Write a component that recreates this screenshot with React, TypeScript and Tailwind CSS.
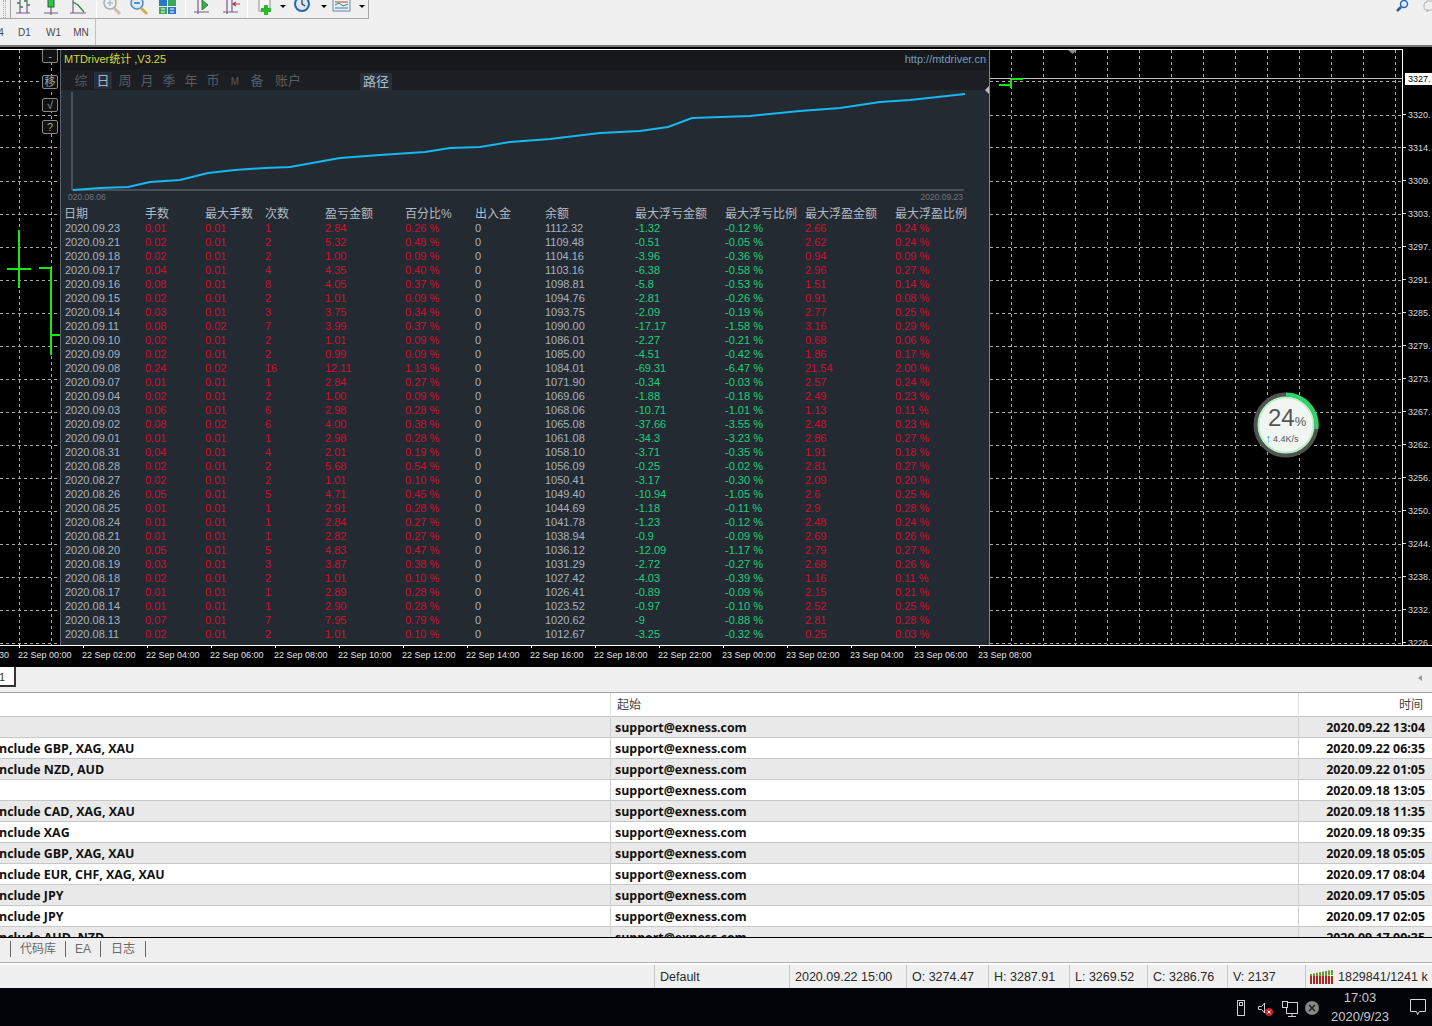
import { Fragment } from "react";

const headers = ["日期", "手数", "最大手数", "次数", "盈亏金额", "百分比%", "出入金", "余额", "最大浮亏金额", "最大浮亏比例", "最大浮盈金额", "最大浮盈比例"];

// date, lots, max lots, count, profit, pct, cash, balance, max loss, loss %, max gain, gain %
const rows = [
  "2020.09.23|0.01|0.01|1|2.84|0.26 %|0|1112.32|-1.32|-0.12 %|2.66|0.24 %",
  "2020.09.21|0.02|0.01|2|5.32|0.48 %|0|1109.48|-0.51|-0.05 %|2.62|0.24 %",
  "2020.09.18|0.02|0.01|2|1.00|0.09 %|0|1104.16|-3.96|-0.36 %|0.94|0.09 %",
  "2020.09.17|0.04|0.01|4|4.35|0.40 %|0|1103.16|-6.38|-0.58 %|2.96|0.27 %",
  "2020.09.16|0.08|0.01|8|4.05|0.37 %|0|1098.81|-5.8|-0.53 %|1.51|0.14 %",
  "2020.09.15|0.02|0.01|2|1.01|0.09 %|0|1094.76|-2.81|-0.26 %|0.91|0.08 %",
  "2020.09.14|0.03|0.01|3|3.75|0.34 %|0|1093.75|-2.09|-0.19 %|2.77|0.25 %",
  "2020.09.11|0.08|0.02|7|3.99|0.37 %|0|1090.00|-17.17|-1.58 %|3.16|0.29 %",
  "2020.09.10|0.02|0.01|2|1.01|0.09 %|0|1086.01|-2.27|-0.21 %|0.68|0.06 %",
  "2020.09.09|0.02|0.01|2|0.99|0.09 %|0|1085.00|-4.51|-0.42 %|1.86|0.17 %",
  "2020.09.08|0.24|0.02|16|12.11|1.13 %|0|1084.01|-69.31|-6.47 %|21.54|2.00 %",
  "2020.09.07|0.01|0.01|1|2.84|0.27 %|0|1071.90|-0.34|-0.03 %|2.57|0.24 %",
  "2020.09.04|0.02|0.01|2|1.00|0.09 %|0|1069.06|-1.88|-0.18 %|2.49|0.23 %",
  "2020.09.03|0.06|0.01|6|2.98|0.28 %|0|1068.06|-10.71|-1.01 %|1.13|0.11 %",
  "2020.09.02|0.08|0.02|6|4.00|0.38 %|0|1065.08|-37.66|-3.55 %|2.48|0.23 %",
  "2020.09.01|0.01|0.01|1|2.98|0.28 %|0|1061.08|-34.3|-3.23 %|2.86|0.27 %",
  "2020.08.31|0.04|0.01|4|2.01|0.19 %|0|1058.10|-3.71|-0.35 %|1.91|0.18 %",
  "2020.08.28|0.02|0.01|2|5.68|0.54 %|0|1056.09|-0.25|-0.02 %|2.81|0.27 %",
  "2020.08.27|0.02|0.01|2|1.01|0.10 %|0|1050.41|-3.17|-0.30 %|2.09|0.20 %",
  "2020.08.26|0.05|0.01|5|4.71|0.45 %|0|1049.40|-10.94|-1.05 %|2.6|0.25 %",
  "2020.08.25|0.01|0.01|1|2.91|0.28 %|0|1044.69|-1.18|-0.11 %|2.9|0.28 %",
  "2020.08.24|0.01|0.01|1|2.84|0.27 %|0|1041.78|-1.23|-0.12 %|2.48|0.24 %",
  "2020.08.21|0.01|0.01|1|2.82|0.27 %|0|1038.94|-0.9|-0.09 %|2.69|0.26 %",
  "2020.08.20|0.05|0.01|5|4.83|0.47 %|0|1036.12|-12.09|-1.17 %|2.79|0.27 %",
  "2020.08.19|0.03|0.01|3|3.87|0.38 %|0|1031.29|-2.72|-0.27 %|2.68|0.26 %",
  "2020.08.18|0.02|0.01|2|1.01|0.10 %|0|1027.42|-4.03|-0.39 %|1.16|0.11 %",
  "2020.08.17|0.01|0.01|1|2.89|0.28 %|0|1026.41|-0.89|-0.09 %|2.15|0.21 %",
  "2020.08.14|0.01|0.01|1|2.90|0.28 %|0|1023.52|-0.97|-0.10 %|2.52|0.25 %",
  "2020.08.13|0.07|0.01|7|7.95|0.79 %|0|1020.62|-9|-0.88 %|2.81|0.28 %",
  "2020.08.11|0.02|0.01|2|1.01|0.10 %|0|1012.67|-3.25|-0.32 %|0.25|0.03 %",
].map((r) => r.split("|"));

const prices = ["3320.", "3314.", "3309.", "3303.", "3297.", "3291.", "3285.", "3279.", "3273.", "3267.", "3262.", "3256.", "3250.", "3244.", "3238.", "3232.", "3226."];
const times = ["22 Sep 00:00", "22 Sep 02:00", "22 Sep 04:00", "22 Sep 06:00", "22 Sep 08:00", "22 Sep 10:00", "22 Sep 12:00", "22 Sep 14:00", "22 Sep 16:00", "22 Sep 18:00", "22 Sep 22:00", "23 Sep 00:00", "23 Sep 02:00", "23 Sep 04:00", "23 Sep 06:00", "23 Sep 08:00"];
const gridY = [81, 115, 147, 181, 214, 247, 280, 313, 346, 379, 412, 445, 478, 511, 544, 577, 610, 643];
const gridX = Array.from({ length: 44 }, (_, i) => 19 + i * 32);

const messages = [
  ["", "2020.09.22 13:04"],
  ["nclude GBP, XAG, XAU", "2020.09.22 06:35"],
  ["nclude NZD, AUD", "2020.09.22 01:05"],
  ["", "2020.09.18 13:05"],
  ["nclude CAD, XAG, XAU", "2020.09.18 11:35"],
  ["nclude XAG", "2020.09.18 09:35"],
  ["nclude GBP, XAG, XAU", "2020.09.18 05:05"],
  ["nclude EUR, CHF, XAG, XAU", "2020.09.17 08:04"],
  ["nclude JPY", "2020.09.17 05:05"],
  ["nclude JPY", "2020.09.17 02:05"],
  ["nclude AUD, NZD", "2020.09.17 00:35"],
];

const curve = "73,190 100,188 128,187 150,182 180,180 208,173 235,170 265,168 290,167 340,158 380,155 425,152 450,148 480,147 510,142 550,139 600,133 640,131 668,127 692,118 750,116 800,111 840,108 880,102 910,100 965,94";

function Separator() {
  return <div className="w-px h-[18px] bg-[#a0a0a0] border-r border-white mx-[5px] shrink-0" />;
}

function ToolIcon({ children }: { children: React.ReactNode }) {
  return (
    <svg width="24" height="24" viewBox="0 0 24 24" fill="none" className="shrink-0 mt-[-3px] overflow-visible">
      {children}
    </svg>
  );
}

function Caret() {
  return <div className="w-0 h-0 border-x-[3px] border-x-transparent border-t-[3px] border-t-black mx-[3px] mt-[5px] shrink-0" />;
}

function Toolbar() {
  const axis = "#7a5a8a";
  return (
    <div className="h-[45px] bg-[#f0f0f0] flex flex-col shrink-0 relative">
      <div className="h-[19px] w-[369px] border-b border-r border-[#a8a8a8] flex items-start overflow-hidden pl-[3px]">
        <div className="w-[3px] h-[18px] border-x border-dotted border-[#b0b0b0] mr-1" />
        <div className="w-px h-[18px] bg-[#a0a0a0] mr-[1px]" />
        <ToolIcon>
          <path d="M8 0v16M4 16h14M15 1v15" stroke={axis} strokeWidth="1.2" />
          <path d="M5 6h3M8 10h3M12 4h3M15 8h3" stroke="#1f8a3a" strokeWidth="1.4" />
        </ToolIcon>
        <div className="w-1" />
        <ToolIcon>
          <path d="M5 16h14M12 0v18" stroke={axis} strokeWidth="1.2" />
          <rect x="9" y="0" width="6" height="10" fill="#35c24a" stroke="#1a6b2a" />
        </ToolIcon>
        <div className="w-[6px]" />
        <ToolIcon>
          <path d="M6 0v16M3 16h16" stroke={axis} strokeWidth="1.2" />
          <path d="M6 5l5 3 6 7" stroke="#1f8a3a" strokeWidth="1.3" />
        </ToolIcon>
        <Separator />
        <ToolIcon>
          <g transform="translate(-2 0)">
            <circle cx="10" cy="6" r="6" stroke="#aaa" strokeWidth="1.5" fill="#eef2f4" />
            <path d="M7 6h6M10 3v6" stroke="#bbb" strokeWidth="1.4" />
            <path d="M14 11l6 6" stroke="#c8c0a8" strokeWidth="3" />
          </g>
        </ToolIcon>
        <div className="w-1" />
        <ToolIcon>
          <g transform="translate(-2 0)">
            <circle cx="10" cy="6" r="6" stroke="#4a88c8" strokeWidth="1.5" fill="#d8ecfa" />
            <path d="M7 6h6" stroke="#2a68a8" strokeWidth="1.4" />
            <path d="M14 11l6 6" stroke="#d8b040" strokeWidth="3" />
          </g>
        </ToolIcon>
        <div className="w-1" />
        <ToolIcon>
          <rect x="3" y="3" width="8" height="6" fill="#2a78c8" />
          <rect x="12" y="3" width="8" height="6" fill="#3aa858" />
          <rect x="3" y="10" width="8" height="7" fill="#3aa858" />
          <rect x="12" y="10" width="8" height="7" fill="#2a78c8" />
          <path d="M5 12h4M5 15h4M14 12h4M14 15h4" stroke="#fff" />
        </ToolIcon>
        <Separator />
        <ToolIcon>
          <path d="M7 0v17M3 15h15" stroke={axis} strokeWidth="1.2" />
          <path d="M11 3v10l6-5z" fill="#38b04a" stroke="#1a6b2a" strokeWidth="0.8" />
        </ToolIcon>
        <div className="w-1" />
        <ToolIcon>
          <g transform="translate(2 0)">
            <path d="M7 0v17M3 15h15M12 0v15" stroke={axis} strokeWidth="1.2" />
            <path d="M20 7h-6M16 5l-3 2 3 2" stroke="#b03050" strokeWidth="1.2" />
          </g>
        </ToolIcon>
        <Separator />
        <ToolIcon>
          <rect x="6" y="1" width="11" height="13" fill="#f4f4f4" stroke="#8a8a8a" />
          <path d="M13 8v10M8 13h10" stroke="#2eb82e" strokeWidth="4" />
        </ToolIcon>
        <Caret />
        <div className="w-[6px]" />
        <ToolIcon>
          <g transform="translate(-4 0)">
            <circle cx="12" cy="7" r="7" fill="#dbe9f6" stroke="#2a68a8" strokeWidth="2" />
            <path d="M12 3v4l3 2" stroke="#333" strokeWidth="1.2" />
          </g>
        </ToolIcon>
        <Caret />
        <div className="w-[3px]" />
        <ToolIcon>
          <g transform="translate(-2 0)">
            <rect x="3" y="2" width="17" height="12" fill="#e8f0f6" stroke="#6a8aa8" />
            <path d="M5 5h13" stroke="#c84040" />
            <path d="M5 8l4-2 4 3 5-2" stroke="#2a9a4a" />
            <path d="M5 11h13" stroke="#4a7ab8" />
          </g>
        </ToolIcon>
        <Caret />
      </div>
      <div className="h-[26px] w-[105px] border-r border-[#c0c0c0] flex items-center pt-[1px] text-[10px] text-[#4a4a4a] font-['Liberation_Sans',sans-serif] ml-[-9px]">
        <span className="w-[19px]">H4</span>
        <span className="w-[29px] text-center">D1</span>
        <span className="w-[29px] text-center">W1</span>
        <span className="w-[26px] text-center">MN</span>
      </div>
      <svg width="14" height="14" viewBox="0 0 14 14" fill="none" className="absolute left-[1395px] top-0">
        <circle cx="9" cy="4" r="3.5" stroke="#2a68b8" strokeWidth="1.5" fill="#dceefa" />
        <path d="M6 7l-4 4" stroke="#2a58a8" strokeWidth="2.5" />
      </svg>
      <svg width="10" height="14" viewBox="0 0 10 14" fill="none" className="absolute left-[1423px] top-0">
        <path d="M3 1h7M1 5q0-3 3-3M1 5v3q0 2 3 2h6M4 10v2l2-2" stroke="#b0b0b0" />
      </svg>
    </div>
  );
}

function ChartPanel() {
  const tabs = ["综", "日", "周", "月", "季", "年", "币", "M", "备"];
  return (
    <div className="absolute left-[60px] top-[3px] w-[930px] h-[595px] bg-[#232a32] border-l border-[#59626e] border-r border-r-[#7a8490] overflow-hidden flex flex-col font-['Liberation_Sans','Noto_Sans_CJK_SC',sans-serif]">
      <div className="h-[20px] shrink-0 bg-[#16181b] flex items-center justify-between px-[3px] pb-[2px] text-[11px]">
        <span className="text-[#d8d838]">MTDriver统计 ,V3.25</span>
        <span className="text-[#6f9fc4]">http://mtdriver.cn</span>
      </div>
      <div className="h-[20px] shrink-0 bg-[#1b1e22] flex items-center pl-[9px] pt-[2px] text-[13px] text-[#585d62] relative">
        {tabs.map((t) => (
          <span key={t} className={t === "M" ? "w-[22px] text-center text-[10px]" : "w-[22px] text-center"}>
            <span className={t === "日" ? "px-[2px] py-[1px] bg-[#27303a] text-[#a8b4c0]" : ""}>{t}</span>
          </span>
        ))}
        <span className="w-[30px] ml-[5px] text-center whitespace-nowrap">账户</span>
        <span className="absolute left-[299px] top-[3px] w-[32px] h-[17px] bg-[#27303a] text-[#b0bcc8] text-center leading-[18px]">路径</span>
      </div>
      <div className="h-[116px] shrink-0 relative">
        <svg width="930" height="116" viewBox="61 90 930 116" fill="none" className="absolute left-0 top-0 overflow-visible">
          <path d="M72 92V190H964" stroke="#6f7680" />
          <polyline points={curve} stroke="#17b8f4" strokeWidth="2" />
          <path d="M989 86v8l-4-4z" fill="#b8bcc0" />
        </svg>
        <span className="absolute left-[7px] top-[101px] text-[8.5px] text-[#6e7680]">020.08.06</span>
        <span className="absolute right-[26px] top-[101px] text-[8.5px] text-[#6e7680]">2020.09.23</span>
      </div>
      <div className="grid grid-cols-[80px_60px_60px_60px_80px_70px_70px_90px_90px_80px_90px_80px] pl-[4px] mt-[1px] leading-[14px] text-[11px]">
        {headers.map((h, i) => (
          <span key={h} className={`text-[12px] text-[#b2bcc8] h-[14px] whitespace-nowrap leading-[14px] ${i === 0 ? "ml-[-1px]" : ""}`}>{h}</span>
        ))}
        {rows.map((r) => (
          <Fragment key={r[0]}>
            {r.map((c, i) => {
              let color = "text-[#d01030]";
              if (i === 0 || i === 6 || i === 7) color = "text-[#a8b3c0]";
              if (i === 8 || i === 9) color = "text-[#1fcf7c]";
              return <span key={i} className={`${color} h-[14px]`}>{c}</span>;
            })}
          </Fragment>
        ))}
      </div>
    </div>
  );
}

function Chart() {
  return (
    <div className="h-[622px] bg-black shrink-0 relative overflow-hidden border-t-2 border-[#777]">
      <div className="flex h-[598px] pt-[2px]">
        <div className="flex-1 relative border-t border-white border-r">
          <svg width="1402" height="595" viewBox="0 50 1402 595" fill="none" className="absolute left-0 top-0">
            {gridY.map((y) => (
              <line key={y} x1="0" x2="1402" y1={y + 0.5} y2={y + 0.5} stroke="#a8a8a8" strokeDasharray="3 3" />
            ))}
            {gridX.map((x) => (
              <line key={x} x1={x + 0.5} x2={x + 0.5} y1="50" y2="645" stroke="#a8a8a8" strokeDasharray="3 3" />
            ))}
            <line x1="60" x2="1402" y1="78.5" y2="78.5" stroke="#c0c0c0" />
            <path d="M19 230v58M7 269h12M19 269h12M39 268h12M51 268v87M51 335h9M999 85h12M1011 79v9M1011 79h12" stroke="#12e812" strokeWidth="2" />
            <path d="M1068 50h9l-4.5 4z" fill="#8a8a8a" />
          </svg>
        </div>
        <div className="w-[29px] relative text-[9px] text-[#d8d8d8] font-['Liberation_Sans',sans-serif] pt-[49px] flex flex-col">
          {prices.map((p) => (
            <div key={p} className="h-[33px] shrink-0 flex items-center gap-[2px] whitespace-nowrap">
              <span className="w-[3px] h-px bg-[#d8d8d8]" />
              <span className="leading-[12px]">{p}</span>
            </div>
          ))}
          <div className="absolute left-[2px] top-[24px] w-[28px] h-[12px] bg-white text-black leading-[12px] pl-[3px]">3327.</div>
        </div>
      </div>
      <div className="h-[22px] border-t border-white flex items-center pb-[2px] text-[9px] text-[#e0e0e0] font-['Liberation_Sans',sans-serif] whitespace-nowrap ml-[-46px]">
        <span className="w-[64px] text-right pr-[9px]">30</span>
        {times.map((t, i) => (
          <span key={i} className="w-[64px] relative">
            <span className="absolute left-[1px] top-[-5px] w-px h-[4px] bg-white" />
            {t}
          </span>
        ))}
      </div>
      <div className="absolute left-[42px] top-[2px] flex flex-col font-['Liberation_Sans','Noto_Sans_CJK_SC',sans-serif] text-[11px] text-[#a8a8a8] text-center leading-[12px]">
        <span className="w-[16px] h-[14px] bg-[#111] border border-[#888] rounded-[2px]">-</span>
        <span className="w-[16px] h-[14px] mt-[12px] bg-[#111] border border-[#888] rounded-[2px]">移</span>
        <span className="w-[16px] h-[14px] mt-[9px] bg-[#111] border border-[#888] rounded-[2px]">√</span>
        <span className="w-[16px] h-[14px] mt-[8px] bg-[#111] border border-[#888] rounded-[2px]">?</span>
      </div>
      <ChartPanel />
      <SpeedWidget />
    </div>
  );
}

function SpeedWidget() {
  return (
    <div className="absolute left-[1253px] top-[345px] w-[66px] h-[66px] font-['Liberation_Sans',sans-serif]">
      <svg width="66" height="66" viewBox="0 0 66 66" fill="none" className="absolute inset-0">
        <circle cx="33" cy="33" r="28" fill="#f2f6f2" stroke="#b8f0c8" strokeWidth="3" />
        <circle cx="33" cy="33" r="30.5" stroke="#4f5451" strokeWidth="4" />
        <path d="M33 2.5A30.5 30.5 0 0 1 63.3 37" stroke="#2ed66a" strokeWidth="4" />
      </svg>
      <div className="absolute left-[15px] top-[13px] flex items-baseline text-[#555]">
        <span className="text-[24px] leading-[26px] font-light">24</span>
        <span className="text-[13px] leading-none">%</span>
      </div>
      <div className="absolute left-[12px] top-[41px] flex items-center gap-[2px] text-[9px] text-[#555] leading-none">
        <span className="text-[#2a9ad8] text-[12px] font-bold">↑</span>
        <span>4.4K/s</span>
      </div>
    </div>
  );
}

function MessageTable() {
  return (
    <div className="h-[245px] shrink-0 bg-white border-t border-[#a0a0a0] overflow-hidden flex flex-col font-['Open_Sans','Noto_Sans_CJK_SC',sans-serif]">
      <div className="h-[24px] shrink-0 grid grid-cols-[610px_688px_1fr] border-b border-[#c0c0c0] text-[12px] text-[#444] font-['Liberation_Sans','Noto_Sans_CJK_SC',sans-serif]">
        <span />
        <span className="border-l border-[#e0e0e0] pl-[6px] leading-[24px]">起始</span>
        <span className="border-l border-[#e0e0e0] pr-[9px] text-right leading-[24px]">时间</span>
      </div>
      {messages.map((m, i) => (
        <div key={i} className={`h-[21px] shrink-0 grid grid-cols-[610px_688px_1fr] border-b border-[#c8c8c8] text-[12.4px] font-bold text-[#111] leading-[22px] whitespace-nowrap ${i % 2 === 0 ? "bg-[#e9e9e9]" : "bg-white"}`}>
          <span className="ml-[-1px]">{m[0]}</span>
          <span className="border-l border-[#d0d0d0] pl-[4px]">support@exness.com</span>
          <span className="border-l border-[#d0d0d0] pr-[7px] text-right">{m[1]}</span>
        </div>
      ))}
    </div>
  );
}

export default function App() {
  const status = [
    { w: "w-[135px]", t: "Default" },
    { w: "w-[117px]", t: "2020.09.22 15:00" },
    { w: "w-[82px]", t: "O: 3274.47" },
    { w: "w-[81px]", t: "H: 3287.91" },
    { w: "w-[78px]", t: "L: 3269.52" },
    { w: "w-[80px]", t: "C: 3286.76" },
    { w: "w-[78px]", t: "V: 2137" },
  ];
  return (
    <div className="w-[1432px] h-[1026px] overflow-hidden flex flex-col bg-[#f0f0f0]">
      <Toolbar />
      <Chart />
      <div className="h-[25px] shrink-0 bg-[#f0f0f0] relative font-['Liberation_Sans',sans-serif]">
        <div className="w-[17px] h-[20px] bg-white border-r-2 border-b-2 border-[#333] text-[11px] leading-[20px] text-[#333] ml-[-1px] pr-[12px] text-right">1</div>
        <div className="absolute right-[10px] top-[8px] w-0 h-0 border-y-[3px] border-y-transparent border-r-[4px] border-r-[#999]" />
      </div>
      <MessageTable />
      <div className="h-[26px] shrink-0 bg-[#efefef] border-t border-black border-b border-b-[#b0b0b0] flex items-center pb-[2px] text-[12px] text-[#6a6a6a] font-['Liberation_Sans','Noto_Sans_CJK_SC',sans-serif]">
        <span className="w-[11px] h-[16px] border-r border-[#666]" />
        <span className="px-[9px]">代码库</span>
        <span className="w-px h-[16px] bg-[#666]" />
        <span className="px-[9px]">EA</span>
        <span className="w-px h-[16px] bg-[#666]" />
        <span className="px-[10px]">日志</span>
        <span className="w-px h-[16px] bg-[#666]" />
      </div>
      <div className="h-[25px] shrink-0 bg-[#f0f0f0] border-t-2 border-white flex items-center text-[12.5px] text-[#2a2a2a] font-['Liberation_Sans',sans-serif] pl-[654px] whitespace-nowrap overflow-hidden">
        {status.map((s) => (
          <span key={s.t} className={`${s.w} shrink-0 border-l border-[#c8c8c8] pl-[5px] h-[23px] leading-[24px]`}>{s.t}</span>
        ))}
        <span className="shrink-0 border-l border-[#c8c8c8] pl-[4px] h-[23px] leading-[24px] flex items-center gap-[3px]">
          <svg width="25" height="14" viewBox="0 0 25 14">
            {[0, 3, 6, 9, 12, 15, 18, 21].map((x) => (
              <Fragment key={x}>
                <rect x={x} y={Math.max(0, 4 - x / 5)} width="2" height="5" fill="#6a9a30" />
                <rect x={x} y="6" width="2" height="8" fill="#a82a20" />
              </Fragment>
            ))}
          </svg>
          1829841/1241 k
        </span>
      </div>
      <div className="h-[38px] shrink-0 bg-[#03030a] flex items-center justify-end text-[#c8c8c8] font-['Liberation_Sans',sans-serif] text-[13px]">
        <svg width="100" height="30" viewBox="0 0 100 30" fill="none" stroke="#d0d0d0">
          <rect x="7.5" y="8.5" width="7" height="15" />
          <rect x="9.5" y="10.5" width="3" height="3" />
          <path d="M28.5 14.5h3l3-3.5v10l-3-3.5h-3z" />
          <circle cx="39" cy="20" r="4" fill="#c82030" stroke="none" />
          <path d="M37.5 18.5l3 3M40.5 18.5l-3 3" stroke="#fff" />
          <rect x="56.5" y="10.5" width="11" height="11" />
          <path d="M62 22v2M58 24.5h8" />
          <rect x="52.5" y="9.5" width="5" height="6" fill="#03030a" />
          <circle cx="82" cy="16" r="7" fill="#888" stroke="none" />
          <path d="M79 13l6 6M85 13l-6 6" stroke="#222" strokeWidth="1.5" />
        </svg>
        <div className="w-[60px] text-center leading-[19px] flex flex-col whitespace-nowrap">
          <span>17:03</span>
          <span>2020/9/23</span>
        </div>
        <svg width="18" height="18" viewBox="0 0 18 18" fill="none" stroke="#d8d8d8" className="ml-[19px] mr-[5px]">
          <path d="M1.5 1.5h15v12h-6l-2 3-1-3h-6z" />
        </svg>
      </div>
    </div>
  );
}
